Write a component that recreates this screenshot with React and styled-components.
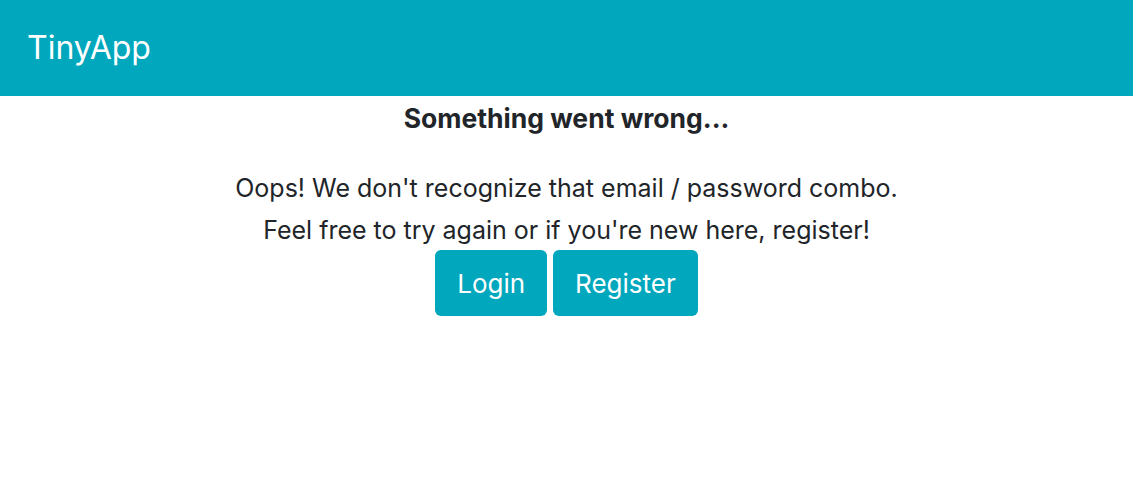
import React from "react";
import styled, { createGlobalStyle } from "styled-components";

const Global = createGlobalStyle`
  body {
    margin: 0;
    font-family: Inter, "Noto Sans", sans-serif;
    color: #212529;
    background: #fff;
  }
`;

const NavBar = styled.nav`
  height: 96px;
  background: #00a7bd;
  display: flex;
  align-items: center;
  padding-left: 27px;
  box-sizing: border-box;
`;

const Brand = styled.a`
  color: #fff;
  font-size: 32px;
  text-decoration: none;
  line-height: 1;
`;

const Main = styled.main`
  text-align: center;
  padding-top: 6px;
`;

const Title = styled.h3`
  font-size: 26.5px;
  font-weight: 700;
  line-height: 32px;
  margin: 0 0 36px;
`;

const Line = styled.p`
  font-size: 25px;
  line-height: 36px;
  margin: 0 0 ${(p) => p.$mb || 0}px;
`;

const Actions = styled.div`
  display: flex;
  justify-content: center;
  gap: 6px;
`;

const Button = styled.a`
  display: inline-flex;
  align-items: center;
  justify-content: center;
  height: 66px;
  padding: 0 22px;
  box-sizing: border-box;
  background: #00a7bd;
  color: #fff;
  border-radius: 6px;
  font-size: 26px;
  text-decoration: none;
`;

export default function App() {
  return (
    <>
      <Global />
      <NavBar>
        <Brand href="#">TinyApp</Brand>
      </NavBar>
      <Main>
        <Title>Something went wrong...</Title>
        <Line $mb={6}>Oops! We don't recognize that email / password combo.</Line>
        <Line $mb={2}>Feel free to try again or if you're new here, register!</Line>
        <Actions>
          <Button href="#">Login</Button>
          <Button href="#">Register</Button>
        </Actions>
      </Main>
    </>
  );
}
